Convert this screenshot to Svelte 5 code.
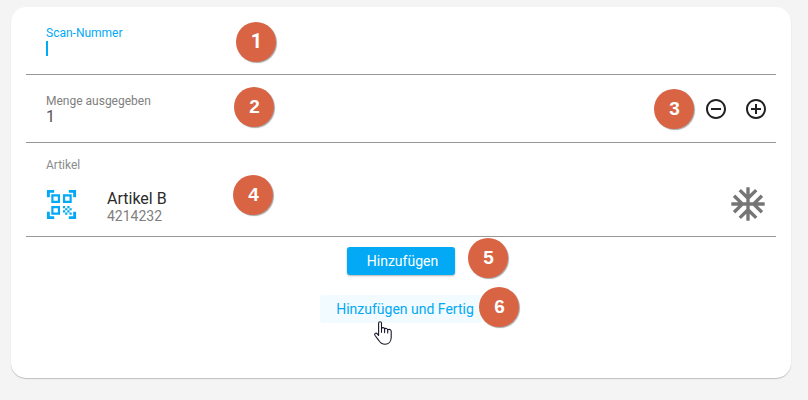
<script>
  const badges = [
    { n: 1, x: 255, y: 42 },
    { n: 2, x: 253, y: 107 },
    { n: 3, x: 673, y: 109 },
    { n: 4, x: 252, y: 195 },
    { n: 5, x: 487, y: 258 },
    { n: 6, x: 498, y: 307 }
  ];
</script>

<div class="page">
  <main class="card">
    <section class="row scan">
      <div class="field">
        <span class="label active">Scan-Nummer</span>
        <span class="caret"></span>
      </div>
    </section>

    <section class="row amount">
      <div class="field">
        <span class="label">Menge ausgegeben</span>
        <span class="value">1</span>
      </div>
      <div class="steppers">
        <svg viewBox="0 0 24 24" width="24" height="24" aria-label="Weniger"><path d="M7 11v2h10v-2H7zm5-9C6.480 2 2 6.480 2 12s4.480 10 10 10 10-4.480 10-10S17.520 2 12 2zm0 18c-4.410 0-8-3.590-8-8s3.590-8 8-8 8 3.590 8 8-3.590 8-8 8z" /></svg>
        <svg viewBox="0 0 24 24" width="24" height="24" aria-label="Mehr"><path d="M13 7h-2v4H7v2h4v4h2v-4h4v-2h-4V7zm-1-5C6.480 2 2 6.480 2 12s4.480 10 10 10 10-4.480 10-10S17.520 2 12 2zm0 18c-4.410 0-8-3.590-8-8s3.590-8 8-8 8 3.590 8 8-3.590 8-8 8z" /></svg>
      </div>
    </section>

    <section class="row article">
      <span class="label light">Artikel</span>
      <div class="item">
        <svg class="qr" viewBox="0 0 24 24" width="35" height="35"><path d="M9.500 6.500v3h-3v-3h3M11 5H5v6h6V5zm-1.500 9.500v3h-3v-3h3M11 13H5v6h6v-6zm6.500-6.500v3h-3v-3h3M19 5h-6v6h6V5zm-6 8h1.500v1.500H13V13zm1.500 1.500H16V16h-1.500v-1.500zM16 13h1.500v1.500H16V13zm-3 3h1.500v1.500H13V16zm1.500 1.500H16V19h-1.500v-1.500zM16 16h1.500v1.500H16V16zm1.500-1.500H19V16h-1.500v-1.500zm0 3H19V19h-1.500v-1.500zM22 7h-2V4h-3V2h5v5zm0 15v-5h-2v3h-3v2h5zM2 22h5v-2H4v-3H2v5zM2 2v5h2V4h3V2H2z" /></svg>
        <div class="text">
          <span class="name">Artikel B</span>
          <span class="number">4214232</span>
        </div>
        <svg class="snow" viewBox="0 0 24 24" width="40" height="40"><path d="M22 11h-4.170l3.240-3.240-1.410-1.420L15 11h-2V9l4.660-4.660-1.420-1.410L13 6.170V2h-2v4.170L7.760 2.930 6.340 4.340 11 9v2H9L4.340 6.340 2.930 7.760 6.170 11H2v2h4.170l-3.240 3.240 1.410 1.420L9 13h2v2l-4.660 4.660 1.420 1.410L11 17.830V22h2v-4.170l3.240 3.240 1.420-1.410L13 15v-2h2l4.660 4.660 1.410-1.420L17.830 13H22z" /></svg>
      </div>
    </section>

    <div class="actions">
      <button class="primary">Hinzufügen</button>
      <button class="secondary">Hinzufügen und Fertig</button>
    </div>
  </main>

  {#each badges as b}
    <span class="badge" class:plain={b.n === 1} style="left: {b.x}px; top: {b.y}px">{b.n}</span>
  {/each}

  <svg class="cursor" viewBox="0 0 18 24" width="18" height="24">
    <path d="M4.600 14.500V2.300C4.600.300 7.500.300 7.500 2.300V7.400C8.200 6.200 10.300 6.300 10.600 7.900C11.500 6.900 13.300 7.300 13.700 8.800C15 8 17.200 8.400 17.200 10.500V16.500C17.200 20.600 14.600 23.300 11.100 23.300C7.600 23.300 6.100 21.700 4.700 19.300L1.100 14.500C-.100 12.700 1.900 11.300 3.300 12.800Z" />
    <path d="M7.500 7.200V11.200M10.600 8V11.600M13.700 8.800V12" />
  </svg>
</div>

<style>
  :global(body) {
    background: #f4f4f4;
  }
  .page {
    position: relative;
    box-sizing: border-box;
    width: 808px;
    height: 400px;
    padding: 7px 17px 0 11px;
    background: #f4f4f4;
    font-family: Roboto, sans-serif;
    overflow: hidden;
  }
  .card {
    box-sizing: border-box;
    height: 371px;
    padding: 0 15px;
    border-radius: 15px;
    background: #fff;
    box-shadow: 0 1px 1px rgba(0, 0, 0, 0.22);
  }
  .row {
    box-sizing: border-box;
    display: flex;
    padding-left: 20px;
    border-bottom: 1px solid #979797;
  }
  .scan {
    height: 68px;
    padding-top: 19px;
  }
  .amount {
    height: 68px;
    padding-top: 19px;
    justify-content: space-between;
  }
  .article {
    height: 94px;
    padding-top: 15px;
    flex-direction: column;
  }
  .field,
  .text {
    display: flex;
    flex-direction: column;
  }
  .label {
    font-size: 12px;
    line-height: 14px;
    color: #808080;
  }
  .label.active {
    color: #03a9f4;
  }
  .label.light {
    color: #8c8c8c;
  }
  .caret {
    width: 2px;
    height: 15px;
    margin-top: 1px;
    background: #03a9f4;
  }
  .value {
    font-size: 16px;
    line-height: 18px;
    color: #555;
  }
  .steppers {
    display: flex;
    gap: 16px;
    margin: 3px 8px 0 0;
  }
  .steppers svg {
    fill: #212121;
  }
  .item {
    display: flex;
    margin-top: 12px;
    height: 40px;
  }
  .qr {
    margin: 3px 0 0 -2px;
    fill: #03a9f4;
  }
  .text {
    margin: 6px 0 0 28px;
  }
  .name {
    font-size: 16px;
    line-height: 18px;
    color: #2b2b2b;
  }
  .number {
    font-size: 14px;
    line-height: 17px;
    color: #808080;
  }
  .snow {
    margin: 0 8px 0 auto;
    fill: #757575;
  }
  .actions {
    display: flex;
    flex-direction: column;
    align-items: center;
    gap: 20px;
    padding-top: 10px;
  }
  button {
    height: 28px;
    padding: 0;
    border: 0;
    border-radius: 3px;
    font: 14px/28px Roboto, sans-serif;
  }
  .primary {
    width: 108px;
    padding-left: 3px;
    background: #03a9f4;
    color: #fff;
    box-shadow: 0 1px 2px rgba(0, 0, 0, 0.3);
  }
  .secondary {
    width: 162px;
    padding-left: 8px;
    background: #f2fbff;
    color: #03a9f4;
  }
  .badge {
    position: absolute;
    box-sizing: border-box;
    width: 40px;
    height: 40px;
    padding-left: 1px;
    margin: -20px 0 0 -19px;
    border-radius: 50%;
    background: #d96444;
    background-clip: padding-box;
    box-shadow: 1px 1px 1px rgba(0, 0, 0, 0.35);
    color: #fff;
    font: bold 19px/39px "Liberation Sans", Arial, sans-serif;
    text-align: center;
  }
  .badge.plain {
    font: bold 20px/38px Roboto, sans-serif;
  }
  .cursor {
    position: absolute;
    left: 374px;
    top: 321px;
    fill: #fff;
    stroke: #181828;
    stroke-width: 1.1;
    stroke-linecap: round;
    stroke-linejoin: round;
  }
</style>
